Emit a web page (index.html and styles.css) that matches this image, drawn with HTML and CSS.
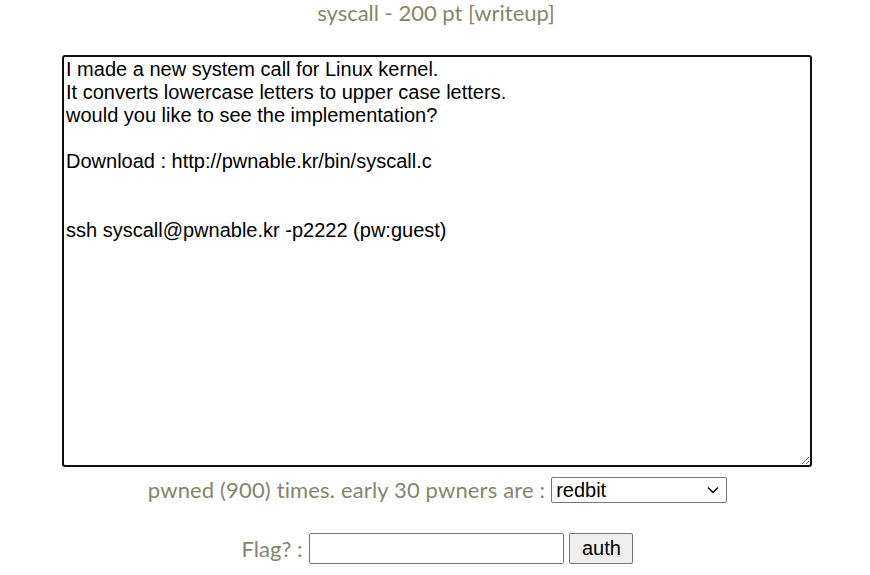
FILE: index.html
```html
<!DOCTYPE html>
<html>
<head>
<meta charset="utf-8">
<link rel="stylesheet" href="styles.css">
</head>
<body>
<div class="page">
  <div class="title">syscall - 200 pt [writeup]</div>
  <textarea class="desc">I made a new system call for Linux kernel.
It converts lowercase letters to upper case letters.
would you like to see the implementation?

Download : http://pwnable.kr/bin/syscall.c


ssh syscall@pwnable.kr -p2222 (pw:guest)
</textarea>
  <div class="pwned">
    <span class="pwned-label">pwned (900) times. early 30 pwners are :</span>
    <span class="select-wrap">
      <select class="pwners"><option>redbit</option></select>
      <svg class="chev" width="12" height="8" viewBox="0 0 12 8"><path d="M1 1.5 L6 6.5 L11 1.5" fill="none" stroke="#000" stroke-width="1.5"/></svg>
    </span>
  </div>
  <form class="flag">
    <span>Flag? :</span>
    <input class="flag-input" type="text">
    <button class="auth" type="button">auth</button>
  </form>
</div>
</body>
</html>
```

FILE: styles.css
```css
html, body {
  margin: 0;
  padding: 0;
  background: #fff;
}
.page {
  font-family: Lato, "Open Sans", sans-serif;
  color: #85856e;
  display: flex;
  flex-direction: column;
  align-items: center;
}
.title {
  font-size: 22px;
  line-height: 26px;
  margin-bottom: 29px;
  padding-left: 2px;
}
.desc {
  display: block;
  box-sizing: border-box;
  width: 750px;
  height: 412px;
  margin-left: 4px;
  border: 2px solid #111;
  border-radius: 3px;
  padding: 1px 2px;
  font-family: "Liberation Sans", Arial, sans-serif;
  font-size: 20px;
  line-height: 23px;
  color: #000;
  resize: both;
  outline: none;
}
.pwned {
  display: flex;
  align-items: center;
  gap: 6px;
  margin-top: 9px;
  font-size: 22px;
  padding-left: 5px;
}
.pwned-label {
  letter-spacing: 0.15px;
}
.select-wrap {
  position: relative;
  display: inline-flex;
}
.pwners {
  appearance: none;
  -webkit-appearance: none;
  box-sizing: border-box;
  width: 176px;
  height: 26px;
  padding: 0 4px;
  font-family: "Liberation Sans", Arial, sans-serif;
  font-size: 20px;
  color: #000;
  border: 1px solid #767676;
  border-radius: 2px;
  background: #fff;
}
.chev {
  position: absolute;
  right: 8px;
  top: 9px;
  pointer-events: none;
}
.flag {
  display: flex;
  align-items: center;
  gap: 6px;
  margin: 30px 0 0 0;
  font-size: 22px;
  padding-left: 5px;
}
.flag-input {
  box-sizing: border-box;
  width: 255px;
  height: 31px;
  margin-left: 1px;
  border: 1px solid #767676;
  border-radius: 2px;
  font-size: 18px;
}
.auth {
  box-sizing: border-box;
  height: 31px;
  width: 64px;
  margin-left: -1px;
  font-family: "Liberation Sans", Arial, sans-serif;
  font-size: 20px;
  color: #000;
  background: #efefef;
  border: 1px solid #767676;
  border-radius: 2px;
  padding: 0 6px;
}
```
